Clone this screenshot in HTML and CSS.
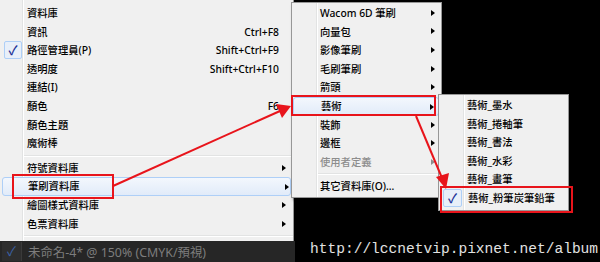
FILE: index.html
```html
<!DOCTYPE html>
<html lang="zh-Hant">
<head>
  <meta charset="UTF-8">
  <title>筆刷資料庫選單</title>
  <link rel="stylesheet" href="styles.css">
</head>
<body>
<div class="screen">

  <!-- 主選單 -->
  <div class="menu menu-main">
    <div class="item"><span class="check"></span><span class="label">資料庫</span></div>
    <div class="item"><span class="check"></span><span class="label">資訊</span><span class="key">Ctrl+F8</span></div>
    <div class="item checked"><span class="check">✓</span><span class="label">路徑管理員(P)</span><span class="key">Shift+Ctrl+F9</span></div>
    <div class="item"><span class="check"></span><span class="label">透明度</span><span class="key">Shift+Ctrl+F10</span></div>
    <div class="item"><span class="check"></span><span class="label">連結(I)</span></div>
    <div class="item"><span class="check"></span><span class="label">顏色</span><span class="key">F6</span></div>
    <div class="item"><span class="check"></span><span class="label">顏色主題</span></div>
    <div class="item"><span class="check"></span><span class="label">魔術棒</span></div>
    <div class="sep"></div>
    <div class="item sub"><span class="check"></span><span class="label">符號資料庫</span></div>
    <div class="item sub hover"><span class="check"></span><span class="label">筆刷資料庫</span></div>
    <div class="item sub"><span class="check"></span><span class="label">繪圖樣式資料庫</span></div>
    <div class="item sub"><span class="check"></span><span class="label">色票資料庫</span></div>
    <div class="sep"></div>
  </div>

  <div class="docbar">
    <span class="check">✓</span>
    <span class="label">未命名-4* @ 150% (CMYK/預視)</span>
  </div>

  <!-- 筆刷資料庫 -->
  <div class="menu menu-brush">
    <div class="item sub"><span class="check"></span><span class="label">Wacom 6D 筆刷</span></div>
    <div class="item sub"><span class="check"></span><span class="label">向量包</span></div>
    <div class="item sub"><span class="check"></span><span class="label">影像筆刷</span></div>
    <div class="item sub"><span class="check"></span><span class="label">毛刷筆刷</span></div>
    <div class="item sub"><span class="check"></span><span class="label">箭頭</span></div>
    <div class="item sub hover"><span class="check"></span><span class="label">藝術</span></div>
    <div class="item sub"><span class="check"></span><span class="label">裝飾</span></div>
    <div class="item sub"><span class="check"></span><span class="label">邊框</span></div>
    <div class="item sub disabled"><span class="check"></span><span class="label">使用者定義</span></div>
    <div class="sep"></div>
    <div class="item"><span class="check"></span><span class="label">其它資料庫(O)...</span></div>
  </div>

  <!-- 藝術 -->
  <div class="menu menu-art">
    <div class="item"><span class="check"></span><span class="label">藝術_墨水</span></div>
    <div class="item"><span class="check"></span><span class="label">藝術_捲軸筆</span></div>
    <div class="item"><span class="check"></span><span class="label">藝術_書法</span></div>
    <div class="item"><span class="check"></span><span class="label">藝術_水彩</span></div>
    <div class="item"><span class="check"></span><span class="label">藝術_畫筆</span></div>
    <div class="item checked"><span class="check">✓</span><span class="label">藝術_粉筆炭筆鉛筆</span></div>
  </div>

  <div class="url">http://lccnetvip.pixnet.net/album</div>

  <!-- 標示 -->
  <div class="mark mark-1"></div>
  <div class="mark mark-2"></div>
  <div class="mark mark-3"></div>
  <svg class="arrows" width="600" height="262" viewBox="0 0 600 262">
    <line x1="113" y1="186" x2="280" y2="111" stroke="#e8141b" stroke-width="2"/>
    <polygon points="291,106 276,104 282,118" fill="#e8141b"/>
    <line x1="416" y1="116" x2="442" y2="178" stroke="#e8141b" stroke-width="2"/>
    <polygon points="446,189 436,177 449,173" fill="#e8141b"/>
  </svg>

</div>
</body>
</html>
```

FILE: styles.css
```css
body {
  margin: 0;
  background: #000;
  font-family: "Noto Sans", "Noto Sans CJK TC", sans-serif;
  font-size: 10.3px;
  font-weight: 500;
}
.screen {
  position: relative;
  width: 600px;
  height: 262px;
  overflow: hidden;
  background: #000;
}

/* 選單共用 */
.menu {
  position: absolute;
  display: flex;
  flex-direction: column;
  background: #f0f0f0;
  box-sizing: border-box;
}
.menu::before {
  content: "";
  position: absolute;
  top: 0;
  bottom: 0;
  width: 1px;
  background: #e2e3e3;
  border-right: 1px solid #fff;
}
.item {
  position: relative;
  display: flex;
  align-items: center;
  height: 18.65px;
  flex: none;
  color: #000;
  white-space: nowrap;
}
.item .check {
  flex: none;
  box-sizing: border-box;
  text-align: center;
  font-size: 13px;
  line-height: 16px;
  color: #1c2f96;
}
.item .label {
  flex: 1;
  line-height: 1;
}
.item .key {
  line-height: 1;
  margin-right: 14px;
}
.item.sub::after {
  content: "";
  position: absolute;
  top: 6px;
  border-left: 4px solid #000;
  border-top: 3.5px solid transparent;
  border-bottom: 3.5px solid transparent;
}
.item.disabled {
  color: #8d8d8d;
}
.item.disabled::after {
  border-left-color: #8d8d8d;
}
.item.hover {
  background: linear-gradient(#f3f7fd, #e1ebf9);
  border: 1px solid #aecff7;
  border-radius: 3px;
  box-sizing: border-box;
}
.item.checked .check {
  background: #e8eff9;
  border: 1px solid #aecff7;
  border-radius: 2px;
  height: 18px;
}
.sep {
  height: 5.8px;
  flex: none;
  display: flex;
  align-items: center;
}
.sep::before {
  content: "";
  display: block;
  height: 1px;
  width: 100%;
  background: #e2e3e3;
  border-bottom: 1px solid #fff;
}

/* 主選單 */
.menu-main {
  left: 0;
  top: 0;
  width: 294px;
  height: 241px;
  padding-top: 3.7px;
  border-right: 1px solid #979797;
}
.menu-main::before {
  left: 22px;
}
.menu-main .check {
  width: 18px;
  margin: 0 3px 0 4px;
}
.menu-main .label {
  padding-left: 2px;
}
.menu-main .sep {
  margin-left: 24px;
}
.menu-main .item.sub::after {
  left: 282px;
}
.menu-main .item.hover {
  margin-left: 2px;
  width: 289px;
}
.menu-main .item.hover .check {
  margin-left: 2px;
}

/* 文件列 */
.docbar {
  position: absolute;
  left: 0;
  top: 241px;
  width: 295px;
  height: 21px;
  background: #262626;
  display: flex;
  align-items: center;
  color: #7d7d7d;
  font-size: 12.4px;
  font-weight: 400;
}
.docbar .check {
  width: 19px;
  height: 19px;
  margin: 0 3px 0 2px;
  border-right: 1px solid #3a3a3a;
  text-align: center;
  line-height: 19px;
  font-size: 13px;
  color: #3b62a8;
  background: #2e2e2e;
}
.docbar .label {
  padding-left: 3px;
}

/* 筆刷資料庫子選單 */
.menu-brush {
  left: 291px;
  top: 2px;
  width: 151px;
  height: 196px;
  padding-top: 0.7px;
  border: 1px solid #979797;
  box-shadow: 2px 2px 3px rgba(0, 0, 0, 0.4);
}
.menu-brush::before {
  left: 24px;
}
.menu-brush .check {
  width: 22px;
  margin-right: 6px;
}
.menu-brush .sep {
  margin-left: 26px;
}
.menu-brush .item.sub::after {
  left: 139px;
}
.menu-brush .item.hover {
  margin: 0 2px 0 1px;
}
.menu-brush .item.hover .check {
  width: 21px;
}
.menu-brush .item.hover::after {
  left: 136px;
}

/* 藝術子選單 */
.menu-art {
  left: 438px;
  top: 94px;
  width: 131px;
  height: 117px;
  padding-top: 0.7px;
  border: 1px solid #979797;
}
.menu-art::before {
  left: 24px;
}
.menu-art .check {
  width: 22px;
  margin-right: 6px;
}
.menu-art .item.checked .check {
  width: 19px;
  margin: 0 6px 0 4px;
}

.url {
  position: absolute;
  left: 310px;
  top: 241px;
  font-family: "Liberation Mono", monospace;
  font-size: 14.55px;
  font-weight: 400;
  color: #e2e2e2;
}

/* 紅色標示 */
.mark {
  position: absolute;
  border: 2px solid #e8141b;
  box-sizing: border-box;
}
.mark-1 {
  left: 12px;
  top: 174px;
  width: 102px;
  height: 25px;
}
.mark-2 {
  left: 291px;
  top: 95px;
  width: 145px;
  height: 21px;
}
.mark-3 {
  left: 440px;
  top: 186px;
  width: 133px;
  height: 27px;
}
.arrows {
  position: absolute;
  left: 0;
  top: 0;
}
```
